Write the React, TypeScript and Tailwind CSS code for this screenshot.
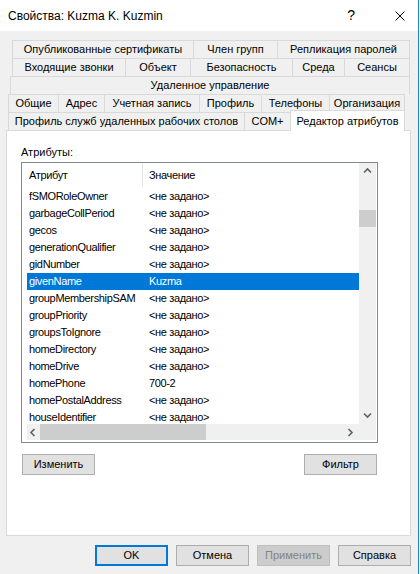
import React from 'react';

type Tab = { label: string; w: string; active?: boolean };

const tabRows: { pl: string; tabs: Tab[] }[] = [
  {
    pl: 'pl-[12px]',
    tabs: [
      { label: 'Опубликованные сертификаты', w: 'w-[181px]' },
      { label: 'Член групп', w: 'w-[84px]' },
      { label: 'Репликация паролей', w: 'w-[133px]' },
    ],
  },
  {
    pl: 'pl-[12px]',
    tabs: [
      { label: 'Входящие звонки', w: 'w-[113px]' },
      { label: 'Объект', w: 'w-[65px]' },
      { label: 'Безопасность', w: 'w-[102px]' },
      { label: 'Среда', w: 'w-[52px]' },
      { label: 'Сеансы', w: 'w-[66px]' },
    ],
  },
  {
    pl: 'pl-[10px]',
    tabs: [{ label: 'Удаленное управление', w: 'w-[400px]' }],
  },
  {
    pl: 'pl-[8px]',
    tabs: [
      { label: 'Общие', w: 'w-[50px]' },
      { label: 'Адрес', w: 'w-[46px]' },
      { label: 'Учетная запись', w: 'w-[95px]' },
      { label: 'Профиль', w: 'w-[62px]' },
      { label: 'Телефоны', w: 'w-[68px]' },
      { label: 'Организация', w: 'w-[76px]' },
    ],
  },
  {
    pl: 'pl-[8px]',
    tabs: [
      { label: 'Профиль служб удаленных рабочих столов', w: 'w-[236px]' },
      { label: 'COM+', w: 'w-[46px]' },
      { label: 'Редактор атрибутов', w: 'w-[115px]', active: true },
    ],
  },
];

const NOT_SET = '<не задано>';

const attributes: { name: string; value: string; selected?: boolean }[] = [
  { name: 'fSMORoleOwner', value: NOT_SET },
  { name: 'garbageCollPeriod', value: NOT_SET },
  { name: 'gecos', value: NOT_SET },
  { name: 'generationQualifier', value: NOT_SET },
  { name: 'gidNumber', value: NOT_SET },
  { name: 'givenName', value: 'Kuzma', selected: true },
  { name: 'groupMembershipSAM', value: NOT_SET },
  { name: 'groupPriority', value: NOT_SET },
  { name: 'groupsToIgnore', value: NOT_SET },
  { name: 'homeDirectory', value: NOT_SET },
  { name: 'homeDrive', value: NOT_SET },
  { name: 'homePhone', value: '700-2' },
  { name: 'homePostalAddress', value: NOT_SET },
  { name: 'houseIdentifier', value: NOT_SET },
];

const Chevron = ({ dir }: { dir: 'up' | 'down' | 'left' | 'right' }) => {
  const d = {
    up: 'M1 5.5 L4.5 2 L8 5.5',
    down: 'M1 2.5 L4.5 6 L8 2.5',
    left: 'M5.5 1 L2 4.5 L5.5 8',
    right: 'M2.5 1 L6 4.5 L2.5 8',
  }[dir];
  return (
    <svg width="9" height="9" viewBox="0 0 9 9" fill="none">
      <path d={d} stroke="#606060" strokeWidth="1.6" />
    </svg>
  );
};

const WinButton = ({
  label,
  variant = 'normal',
}: {
  label: string;
  variant?: 'normal' | 'default' | 'disabled';
}) => (
  <div
    role="button"
    className={
      variant === 'default'
        ? 'flex h-[21px] w-[73px] items-center justify-center border-2 border-[#0078d7] bg-[#e1e1e1] text-[11px] text-black'
        : variant === 'disabled'
          ? 'flex h-[21px] w-[73px] items-center justify-center border border-[#bfbfbf] bg-[#cccccc] text-[11px] text-[#838383]'
          : 'flex h-[21px] w-[73px] items-center justify-center border border-[#adadad] bg-[#e1e1e1] text-[11px] text-black'
    }
  >
    {label}
  </div>
);

export default function App() {
  return (
    <div className="flex h-[574px] w-[420px] bg-white font-['Liberation_Sans',Arial,sans-serif] text-black">
      <div className="flex h-full w-[419px] flex-col border-r border-[#1883d7]">
        {/* Title bar */}
        <div className="flex h-[31px] items-center bg-white pl-[8px] text-[12px]">
          <span className="flex-1 whitespace-nowrap">Свойства: Kuzma K. Kuzmin</span>
          <span className="mr-[40px] text-[14px]">?</span>
          <svg className="mr-[13px]" width="10" height="10" viewBox="0 0 10 10">
            <path d="M0.5 0.5 L9.5 9.5 M9.5 0.5 L0.5 9.5" stroke="#000" strokeWidth="1" />
          </svg>
        </div>

        {/* Body */}
        <div className="flex flex-1 flex-col bg-[#f0f0f0] pt-[9px]">
          {tabRows.map((row, i) => (
            <div key={i} className={`flex h-[18px] ${row.pl} whitespace-nowrap text-[11px]`}>
              {row.tabs.map((tab, j) => (
                <div
                  key={tab.label}
                  className={
                    tab.active
                      ? `relative z-10 -mt-[2px] -mb-[1px] flex h-[21px] ${tab.w} justify-center border-x border-t border-[#d9d9d9] bg-white pt-[2px]`
                      : `flex h-[18px] ${tab.w} items-center justify-center border-t border-l border-[#d9d9d9] bg-[#f0f0f0] ${
                          j === row.tabs.length - 1 ? 'border-r' : ''
                        }`
                  }
                >
                  {tab.label}
                </div>
              ))}
            </div>
          ))}

          {/* Panel */}
          <div className="ml-[6px] flex h-[406px] w-[405px] flex-col border border-[#d9d9d9] bg-white pl-[14px] pt-[13px]">
            <div className="h-[16px] text-[11px] leading-[16px]">Атрибуты:</div>

            {/* List view */}
            <div className="mt-[2px] flex h-[281px] w-[357px] flex-col border border-[#828790] bg-white pb-[2px] pl-[5px] pr-[1px]">
              <div className="grid h-[277px] grid-cols-[1fr_17px] grid-rows-[1fr_16px]">
                <div className="flex flex-col overflow-hidden whitespace-nowrap text-[11px] tracking-[-0.35px]">
                  <div className="flex h-[24px] shrink-0 items-center">
                    <div className="flex h-full w-[116px] items-center border-r border-[#e5e5e5] pl-[2px]">
                      Атрибут
                    </div>
                    <div className="pl-[6px]">Значение</div>
                  </div>
                  <div className="mt-[1px] flex flex-col">
                    {attributes.map((a) => (
                      <div
                        key={a.name}
                        className={`flex h-[17px] shrink-0 items-center ${
                          a.selected ? 'bg-[#0078d7] text-white' : ''
                        }`}
                      >
                        <div className="w-[116px] pl-[2px]">{a.name}</div>
                        <div className="pl-[6px]">{a.value}</div>
                      </div>
                    ))}
                  </div>
                </div>

                {/* Vertical scrollbar */}
                <div className="flex flex-col bg-[#f0f0f0]">
                  <div className="flex h-[17px] items-center justify-center">
                    <Chevron dir="up" />
                  </div>
                  <div className="mt-[30px] h-[17px] bg-[#cdcdcd]" />
                  <div className="flex-1" />
                  <div className="flex h-[17px] items-center justify-center">
                    <Chevron dir="down" />
                  </div>
                </div>

                {/* Horizontal scrollbar */}
                <div className="flex items-stretch bg-[#f0f0f0]">
                  <div className="flex w-[13px] items-center justify-center">
                    <Chevron dir="left" />
                  </div>
                  <div className="w-[166px] bg-[#cdcdcd]" />
                  <div className="flex-1" />
                  <div className="flex w-[17px] items-center justify-center">
                    <Chevron dir="right" />
                  </div>
                </div>
                <div className="bg-[#f0f0f0]" />
              </div>
            </div>

            <div className="ml-[1px] mt-[11px] flex w-[355px] justify-between">
              <WinButton label="Изменить" />
              <WinButton label="Фильтр" />
            </div>
          </div>

          {/* Dialog buttons */}
          <div className="mt-[9px] flex gap-[8px] pl-[95px]">
            <WinButton label="OK" variant="default" />
            <WinButton label="Отмена" />
            <WinButton label="Применить" variant="disabled" />
            <WinButton label="Справка" />
          </div>
        </div>
      </div>
    </div>
  );
}
